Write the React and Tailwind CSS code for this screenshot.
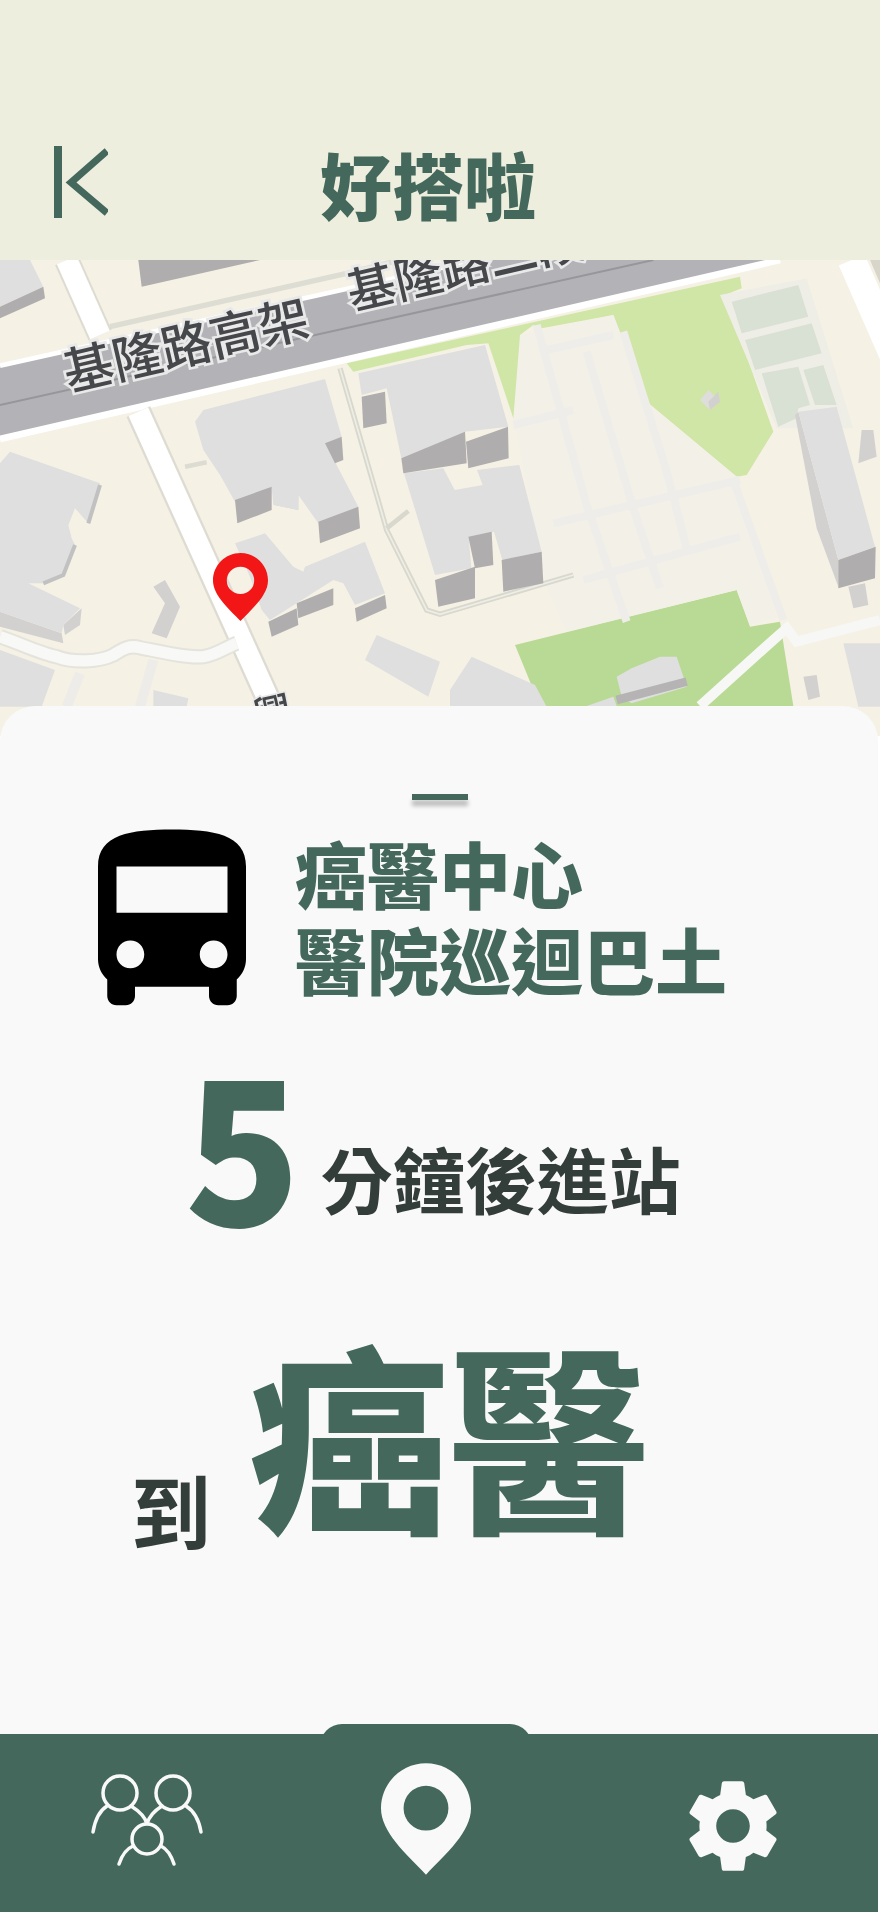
import React from 'react';

const GREEN = '#44685C';

// map art is traced at 3x page px, viewBox offset so y=15 is the top of the map
const plaza = [
  '1560,240 1840,180 1940,440 2210,665 2330,1090 2250,1110 2210,1005 1700,1130 1640,1000 1540,490',
];
const plazaPaths = [
  'M1610 210 L1760 750 L1880 1100',
  'M1760 290 L1900 760 L1980 1000',
  'M1870 230 L2000 650 L2060 880',
  'M2200 675 L2350 1095',
  'M1750 975 L2220 845',
  'M1660 805 L2220 675',
  'M1620 290 L1840 240',
  'M1540 510 L1720 465',
];
const fields = [
  '2195,140 2395,90 2425,185 2225,235',
  '2235,255 2435,205 2465,295 2265,345',
  '2285,355 2395,335 2430,450 2395,460 2390,490 2335,515',
  '2410,345 2470,330 2510,450 2445,450',
];
const darks = [
  '415,15 780,15 425,95',
  '0,155 130,95 135,130 0,190',
  '1204,610 1395,530 1400,625 1210,655',
  '1398,560 1524,515 1526,610 1405,640',
  '1085,425 1155,410 1160,505 1090,520',
  '1305,975 1425,935 1425,1030 1315,1055',
  '1405,845 1475,830 1480,930 1425,940',
  '1505,915 1625,890 1630,985 1510,1010',
  '705,735 815,695 815,765 712,805',
  '955,800 1075,755 1080,820 960,865',
  '975,565 1025,545 1030,615 1005,625',
  '805,1100 890,1060 895,1110 815,1145',
  '890,1045 1000,1000 1000,1050 895,1090',
  '1065,1060 1155,1020 1160,1060 1070,1100',
  '2515,915 2627,875 2625,970 2515,1000',
];
const tops = [
  '0,15 90,15 130,95 0,155',
  '1075,355 1320,300 1455,270 1525,515 1395,530 1395,560 1204,610 1160,400 1085,420',
  '1212,655 1330,640 1364,705 1448,690 1431,645 1558,630 1625,890 1507,915 1482,830 1406,845 1414,940 1305,960',
  '585,500 610,465 975,372 1025,545 980,565 1010,630 1075,755 955,805 895,720 895,765 820,750 815,695 705,740 660,660 610,585',
  '705,865 795,835 880,935 910,950 915,935 1095,860 1155,1015 1065,1050 1030,985 1000,975 890,1045 810,1095 785,1065 750,965',
  '0,625 30,590 300,685 265,805 225,760 205,810 215,850 225,870 190,960 130,985 85,985 240,1060 190,1110 185,1135 0,1070',
  '0,1185 165,1245 125,1355 0,1355',
  '1095,1215 1130,1140 1320,1220 1285,1325',
  '1350,1305 1415,1205 1605,1290 1640,1355 1350,1355',
  '1850,1265 1895,1240 1980,1205 2030,1205 2060,1295 1895,1345 1865,1325',
  '2395,470 2510,455 2625,875 2515,915 2430,600',
  '2530,1165 2640,1165 2640,1355 2575,1355',
  '1760,1353 1840,1325 1850,1353',
  '460,1305 565,1330 560,1355 460,1355',
];
const sides = [
  '0,1070 185,1135 190,1165 0,1115',
  '245,1060 240,1110 195,1140 190,1110',
  '2385,480 2395,470 2515,915 2515,995 2450,820',
  '820,675 895,675 895,765 825,750',
  '460,995 495,975 540,1055 500,1150 455,1135 495,1045',
  '2410,1265 2450,1260 2460,1325 2425,1335',
  '2545,995 2595,985 2605,1050 2560,1060',
  '2585,525 2620,525 2630,605 2575,625',
  '2125,440 2155,410 2160,440 2130,465',
];

function MapArt() {
  return (
    <svg viewBox="0 15 2640 1428" className="block w-[880px] h-[476px] blur-[0.5px]">
      <rect x="0" y="0" width="2640" height="1500" fill="#F5F1E5" />
      <polygon
        points="1040,325 2220,65 2225,100 2175,120 2320,530 2240,660 2210,665 1940,440 1840,180 1625,220 1600,210 1560,240 1620,470 1540,490 1465,265 1400,270 1060,350"
        fill="#CFE6A6"
      />
      <polygon points="1545,1170 2210,1005 2250,1115 2340,1100 2380,1353 1620,1353" fill="#B9DA95" />
      {plaza.map((p) => <polygon key={p} points={p} fill="#F3F0E7" />)}
      {plazaPaths.map((d) => <path key={d} d={d} fill="none" stroke="#EEEDE9" strokeWidth="24" />)}
      <polygon points="2160,120 2420,70 2560,520 2330,520" fill="#EFEEE6" />
      {fields.map((p) => <polygon key={p} points={p} fill="#D9E1D4" />)}
      <polygon points="2125,405 2155,435 2130,465 2100,435" fill="#DEDDDC" />

      {/* roads */}
      <polygon points="0,330 1430,15 2320,15 0,545" fill="#B3B3B7" />
      <path d="M0 450 L1960 15" stroke="#97979B" strokeWidth="6" fill="none" />
      <path d="M0 332 L1430 15" stroke="#fff" strokeWidth="14" fill="none" />
      <path d="M0 552 L2340 15" stroke="#fff" strokeWidth="20" fill="none" />
      <path d="M330 215 L1040 55 L1200 15" stroke="#DEDDD3" strokeWidth="16" fill="none" />
      <path d="M200 15 L300 240" stroke="#DEDCD2" strokeWidth="76" fill="none" />
      <path d="M415 470 L835 1400" stroke="#DEDCD2" strokeWidth="78" fill="none" />
      <path d="M200 15 L300 240" stroke="#fff" strokeWidth="64" fill="none" />
      <path d="M415 470 L835 1400" stroke="#fff" strokeWidth="64" fill="none" />
      <path d="M2555 15 L2680 300" stroke="#fff" strokeWidth="84" fill="none" />
      <polygon points="2610,15 2640,15 2640,85" fill="#D8D6CB" />
      <path d="M555 635 L620 622" stroke="#DDDCD3" strokeWidth="14" fill="none" />
      <path d="M1020 340 L1130 720 L1160 825 L1280 1065 L1320 1078 L1720 960" stroke="#D8D8CE" strokeWidth="16" fill="none" />
      <path d="M1020 340 L1130 720 L1160 825 L1280 1065 L1320 1078 L1720 960" stroke="#EFEEE6" strokeWidth="5" fill="none" />
      <path d="M1160 820 L1225 768" stroke="#D8D8CE" strokeWidth="14" fill="none" />
      <path d="M240 1255 L200 1355 M460 1215 L420 1355" stroke="#EDECE8" strokeWidth="30" fill="none" />
      <path
        d="M0 1145 C60 1165 120 1195 170 1205 C220 1225 300 1220 340 1200 C370 1180 390 1170 420 1178 C480 1190 560 1210 610 1205 C650 1200 680 1175 710 1165"
        stroke="#E4E3DC" strokeWidth="46" fill="none"
      />
      <path
        d="M0 1145 C60 1165 120 1195 170 1205 C220 1225 300 1220 340 1200 C370 1180 390 1170 420 1178 C480 1190 560 1210 610 1205 C650 1200 680 1175 710 1165"
        stroke="#F8F8F6" strokeWidth="34" fill="none"
      />
      <path d="M2100 1353 L2320 1155 L2360 1120 L2390 1160 L2640 1095" stroke="#F7F7F5" strokeWidth="30" fill="none" />

      {/* buildings */}
      {sides.map((p) => <polygon key={p} points={p} fill="#D2D1D0" />)}
      {tops.map((p) => <polygon key={p} points={p} fill="#E0DFDF" />)}
      {darks.map((p) => <polygon key={p} points={p} fill="#AFADAD" />)}
      <path d="M300 690 L265 805 M225 870 L190 960 L130 985" stroke="#C2C1C1" strokeWidth="12" fill="none" />
      <path d="M1850 1335 L2060 1280" stroke="#B5B3B3" strokeWidth="26" fill="none" />

      {/* labels */}
      <text
        x="205" y="408" transform="rotate(-13 205 408)"
        fontSize="150" fontWeight="500" fill="#45474A"
        stroke="#E9E9E9" strokeWidth="16" paintOrder="stroke"
      >
        基隆路高架
      </text>
      <text
        x="1055" y="165" transform="rotate(-13 1055 165)"
        fontSize="145" fontWeight="500" fill="#45474A"
        stroke="#E9E9E9" strokeWidth="16" paintOrder="stroke"
      >
        基隆路二段
      </text>
      <text
        x="770" y="1430" transform="rotate(-13 770 1430)"
        fontSize="120" fontWeight="500" fill="#45474A"
        stroke="#E9E9E9" strokeWidth="10" paintOrder="stroke"
      >
        興
      </text>
    </svg>
  );
}

function PeopleIcon() {
  return (
    <svg width="114" height="94" viewBox="89 1773 114 94" fill="none" stroke="#F9F9F9" strokeWidth="3.5" strokeLinecap="round">
      <circle cx="119" cy="1793" r="17" />
      <circle cx="172" cy="1793" r="17" />
      <circle cx="146" cy="1839" r="15" />
      <path d="M92 1832C94 1820 98 1811 106 1806" />
      <path d="M130 1806C138 1811 144 1816 146 1824C148 1816 153 1811 161 1806" />
      <path d="M185 1806C193 1811 198 1820 200 1832" />
      <path d="M118 1864C121 1855 125 1849 132 1846" />
      <path d="M160 1846C166 1849 170 1855 173 1864" />
    </svg>
  );
}

export default function App() {
  return (
    <div className="w-[880px] h-[1912px] overflow-hidden bg-white font-['Noto_Sans_CJK_TC','Noto_Sans',sans-serif]">
      <header className="h-[260px] bg-[#EEEEDE] flex items-start pt-[146px] pl-[54px]">
        <svg width="54" height="72" viewBox="0 0 54 72" className="shrink-0">
          <rect x="0" y="0" width="8" height="72" fill={GREEN} />
          <path d="M53 5L17 36.5L53 67" fill="none" stroke={GREEN} strokeWidth="7" />
        </svg>
        <h1 className="ml-[212px] -mt-[13px] text-[72px] leading-[100px] font-black text-[#44685C]">好搭啦</h1>
      </header>

      <div className="relative h-[476px]">
        <MapArt />
        <svg
          width="55"
          height="68"
          viewBox="0 0 55 68"
          className="absolute left-[213px] top-[293px]"
        >
          <path
            fillRule="evenodd"
            fill="#F31616"
            d="M27.5 0C42.7 0 55 12.3 55 27.5C55 42 40 55 27.5 68C15 55 0 42 0 27.5C0 12.3 12.3 0 27.5 0ZM27.5 13.7a13.7 13.7 0 1 0 0 27.4a13.7 13.7 0 1 0 0-27.4Z"
          />
        </svg>
      </div>

      <main className="relative -mt-[30px] w-[878px] h-[1028px] rounded-t-[35px] bg-[#F9F9F9] flex flex-col">
        <div className="ml-[412px] mt-[88px] w-[56px] h-[6px] bg-[#44685C] shadow-[0_6px_4px_rgba(0,0,0,0.25)]" />

        <section className="mt-[11px] pl-[61px] flex items-start">
          <svg width="222" height="222" viewBox="0 0 24 24" className="shrink-0">
            <path
              fill="#000"
              d="M4 16c0 .88.39 1.67 1 2.22V20c0 .55.45 1 1 1h1c.55 0 1-.45 1-1v-1h8v1c0 .55.45 1 1 1h1c.55 0 1-.45 1-1v-1.78c.61-.55 1-1.34 1-2.22V6c0-3.5-3.58-4-8-4s-8 .5-8 4v10zm3.5 1c-.83 0-1.5-.67-1.5-1.5S6.67 14 7.5 14s1.5.67 1.5 1.5S8.33 17 7.5 17zm9 0c-.83 0-1.5-.67-1.5-1.5s.67-1.5 1.5-1.5 1.5.67 1.5 1.5-.67 1.5-1.5 1.5zm1.5-6H6V6h12v5z"
            />
          </svg>
          <h2 className="ml-[12px] mt-[18px] text-[72px] leading-[86px] font-black text-[#44685C]">
            癌醫中心
            <br />
            醫院巡迴巴土
          </h2>
        </section>

        <section className="pl-[185px] flex items-end mt-[2px]">
          <span className="inline-block origin-bottom scale-y-[1.05] text-[190px] leading-[220px] font-black text-[#44685C]">5</span>
          <span className="ml-[20px] mb-[33px] text-[72px] leading-[90px] font-bold text-[#333D3A]">分鐘後進站</span>
        </section>

        <section className="pl-[131px] flex items-end mt-[56px]">
          <span className="text-[80px] leading-[86px] font-bold text-[#333D3A]">到</span>
          <span className="ml-[38px] text-[200px] leading-[240px] font-black text-[#44685C]">癌醫</span>
        </section>
      </main>

      <nav className="relative w-[878px] h-[178px] bg-[#44685C]">
        <div className="absolute left-[320px] -top-[10px] w-[212px] h-[30px] rounded-t-[22px] bg-[#44685C]" />
        <div className="relative flex items-start">
          <div className="ml-[90px] mt-[39px]">
            <PeopleIcon />
          </div>
          <svg width="90" height="112" viewBox="0 0 55 68" className="ml-[177px] mt-[29px]">
            <path
              fillRule="evenodd"
              fill="#F9F9F9"
              d="M27.5 0C42.7 0 55 12.3 55 27.5C55 42 40 55 27.5 68C15 55 0 42 0 27.5C0 12.3 12.3 0 27.5 0ZM27.5 13.7a13.7 13.7 0 1 0 0 27.4a13.7 13.7 0 1 0 0-27.4Z"
            />
          </svg>
          <svg width="112" height="112" viewBox="0 0 24 24" className="ml-[206px] mt-[36px]">
            <path
              fill="#F9F9F9"
              d="M19.14 12.94c.04-.3.06-.61.06-.94 0-.32-.02-.64-.07-.94l2.03-1.58c.18-.14.23-.41.12-.61l-1.92-3.32c-.12-.22-.37-.29-.59-.22l-2.39.96c-.5-.38-1.03-.7-1.62-.94l-.36-2.54c-.04-.24-.24-.41-.48-.41h-3.84c-.24 0-.43.17-.47.41l-.36 2.54c-.59.24-1.13.57-1.62.94l-2.39-.96c-.22-.08-.47 0-.59.22L2.74 8.87c-.12.21-.08.47.12.61l2.03 1.58c-.05.3-.09.63-.09.94s.02.64.07.94l-2.03 1.58c-.18.14-.23.41-.12.61l1.92 3.32c.12.22.37.29.59.22l2.39-.96c.5.38 1.03.7 1.62.94l.36 2.54c.05.24.24.41.48.41h3.84c.24 0 .44-.17.47-.41l.36-2.54c.59-.24 1.13-.56 1.62-.94l2.39.96c.22.08.47 0 .59-.22l1.92-3.32c.12-.22.07-.47-.12-.61l-2.01-1.58zM12 15.6c-1.98 0-3.6-1.62-3.6-3.6s1.62-3.6 3.6-3.6 3.6 1.62 3.6 3.6-1.62 3.6-3.6 3.6z"
            />
          </svg>
        </div>
      </nav>
    </div>
  );
}
